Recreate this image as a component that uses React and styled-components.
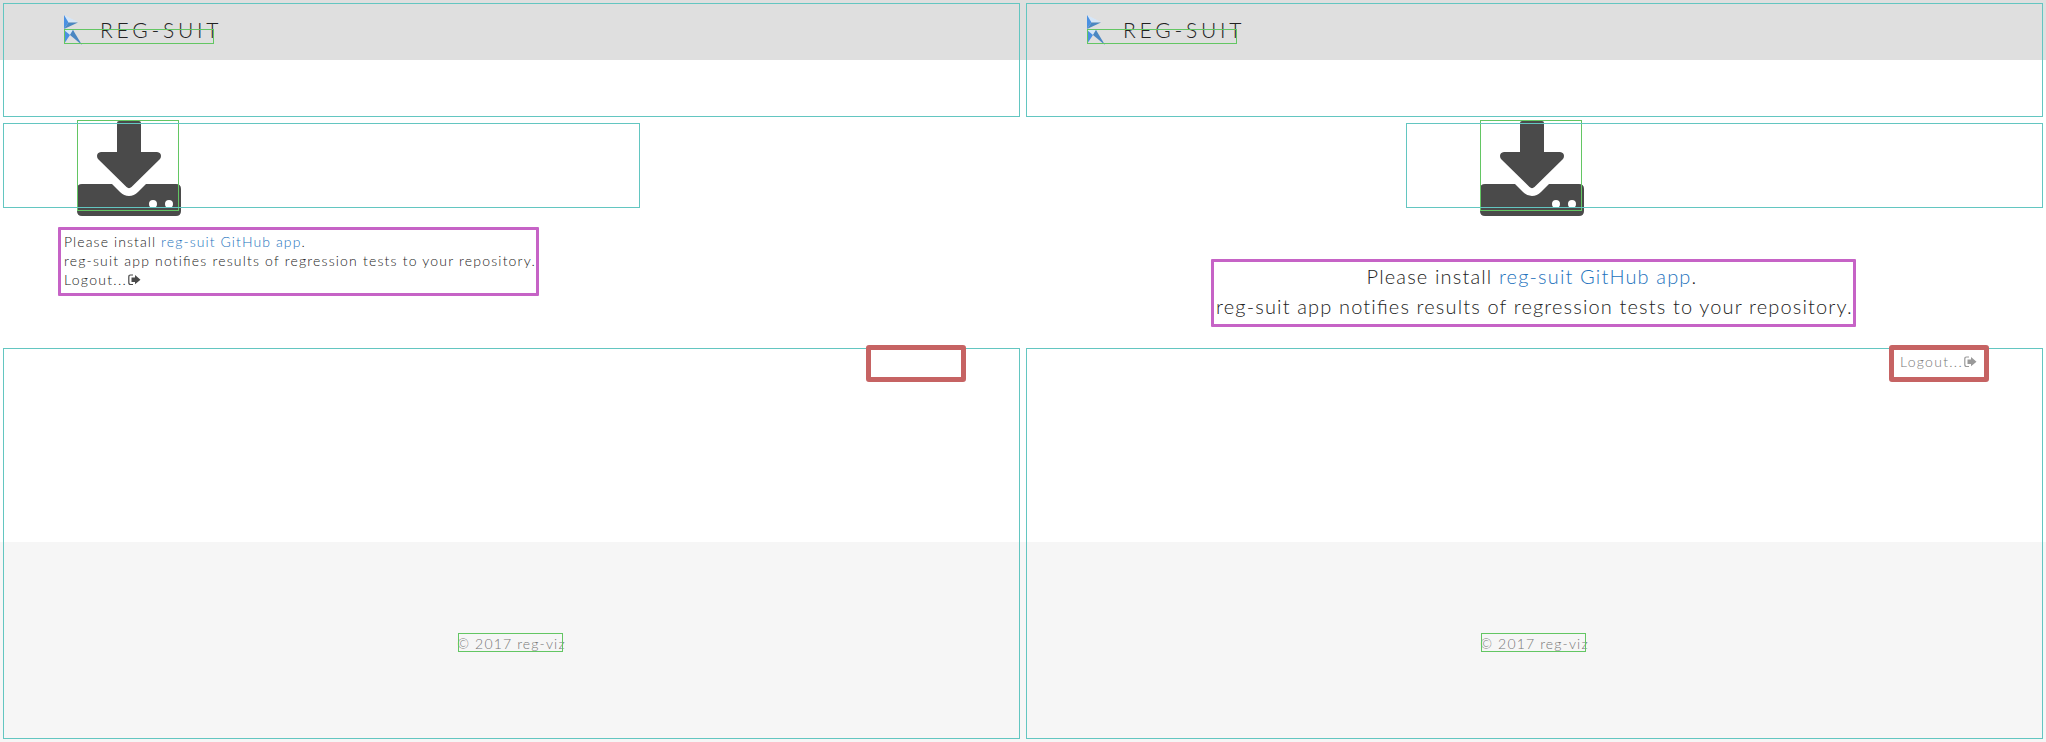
import React from 'react';
import styled, { createGlobalStyle } from 'styled-components';

const GlobalStyle = createGlobalStyle`
  * { box-sizing: border-box; }
  body { margin: 0; background: #fff; font-family: Lato, "Open Sans", sans-serif; color: #4a4a4a; }
`;

const Comparison = styled.div`
  display: grid;
  grid-template-columns: 1023px 1023px;
  height: 742px;
  overflow: hidden;
`;
const Panel = styled.section`
  position: relative;
  display: flex;
  flex-direction: column;
  height: 742px;
`;
const Header = styled.header`
  height: 60px;
  padding: 15px 64px 0;
  display: flex;
  align-items: flex-start;
  background: #dfdfdf;
`;
const LogoText = styled.span`
  margin-left: 17px;
  font-size: 21px;
  font-weight: 300;
  line-height: 30px;
  letter-spacing: 3.8px;
  color: #222;
  white-space: nowrap;
`;
const Main = styled.main`
  flex: 1;
  display: flex;
  flex-direction: column;
  align-items: ${p => (p.$centered ? 'center' : 'flex-start')};
  padding: 61px 64px 0;
`;
const IconHolder = styled.div`
  height: 96px;
  margin-left: ${p => (p.$centered ? '-5px' : '13px')};
  svg { display: block; }
`;
const Message = styled.div`
  margin-top: ${p => (p.$large ? '44px' : '15px')};
  text-align: ${p => (p.$large ? 'center' : 'left')};
  font-size: ${p => (p.$large ? '20px' : '14px')};
  line-height: ${p => (p.$large ? '30px' : '19px')};
  font-weight: 300;
  letter-spacing: ${p => (p.$large ? '1.15px' : '1.19px')};
  color: #222;
  white-space: nowrap;
  p { margin: 0; }
  p:first-child {
    padding-right: ${p => (p.$large ? '5px' : '0')};
    letter-spacing: ${p => (p.$large ? '1.15px' : '1.1px')};
  }
`;
const Ligature = styled.span`font-feature-settings: "liga" 1;`;
const Link = styled.a`color: #2473bd;`;
const Logout = styled.div`
  display: flex;
  align-items: center;
  height: 19px;
  font-size: 14px;
  font-weight: 300;
  line-height: 19px;
  letter-spacing: 1.3px;
  color: ${p => (p.$muted ? '#777' : '#222')};
  align-self: ${p => (p.$muted ? 'flex-end' : 'auto')};
  margin-top: ${p => (p.$muted ? '31px' : '0')};
  margin-right: ${p => (p.$muted ? '5px' : '0')};
  svg { margin-left: 1px; color: ${p => (p.$muted ? '#999' : '#4a4a4a')}; }
`;
const Footer = styled.footer`
  height: 200px;
  padding-top: 2px;
  display: flex;
  align-items: center;
  justify-content: center;
  background: #f6f6f6;
  color: #777;
  font-size: 14px;
  font-weight: 300;
  letter-spacing: 1.15px;
`;
const Marker = styled.div`
  position: absolute;
  left: ${p => p.$x}px;
  top: ${p => p.$y}px;
  width: ${p => p.$w}px;
  height: ${p => p.$h}px;
  border: ${p => p.$line || 1}px solid ${p => p.$color};
  border-radius: ${p => p.$radius || 0}px;
`;

const CYAN = '#63c6c1';
const GREEN = '#63c663';
const MAGENTA = '#c663c6';
const RED = '#c66363';

const LogoMark = () => (
  <svg width="19" height="30" viewBox="0 0 19 30">
    <path d="M0 0 14 7 4 7Z" fill="#d5e6f8" />
    <path d="M0 0 4.500 7.500 0 14Z" fill="#4a90e2" />
    <path d="M4.500 7.500H14L0 14Z" fill="#4b87c2" />
    <path d="M0 14.500H9L5.500 20Z" fill="#d5e6f8" />
    <path d="M0 15 6 20 0 29Z" fill="#4a90e2" />
    <path d="M6 20 9 15 11 20Z" fill="#84b5ea" />
    <path d="M9 15 18 30 6 20Z" fill="#4b87c2" />
  </svg>
);

const DownloadIcon = () => (
  <svg width="104" height="96" viewBox="0 0 104 96" fill="#4a4a4a">
    <path d="M42 0H62Q64 0 64 2V31H80Q84 31.500 84 35Q84 37 82.500 38.500L54.500 66Q52 68.300 49.500 66L21.500 38.500Q20 37 20 35Q20 31.500 24 31H40V2Q40 0 42 0Z" />
    <path fillRule="evenodd" d="M5 63H35L43 71Q47 75 52 75Q57 75 61 71L69 63H99Q104 63 104 68V90Q104 95 99 95H5Q0 95 0 90V68Q0 63 5 63ZM72 83A4 4 0 1 0 80 83A4 4 0 1 0 72 83ZM88 83A4 4 0 1 0 96 83A4 4 0 1 0 88 83Z" />
  </svg>
);

const SignOutIcon = () => (
  <svg width="13" height="12" viewBox="0 0 13 12">
    <path d="M5 1H2.500Q.8 1 .8 3V8.500Q.8 10.500 2.500 10.500H5" fill="none" stroke="currentColor" strokeWidth="1.200" />
    <path d="M3.500 3.500H7V1L12.500 5.700 7 10.300V8H3.500Z" fill="currentColor" />
  </svg>
);

const LogoutLink = ({ muted }) => (
  <Logout $muted={muted}>Logout...<SignOutIcon /></Logout>
);

const Page = ({ centered, markers }) => (
  <Panel>
    <Header><LogoMark /><LogoText>REG-SUIT</LogoText></Header>
    <Main $centered={centered}>
      <IconHolder $centered={centered}><DownloadIcon /></IconHolder>
      <Message $large={centered}>
        <p>Please install <Link>reg-suit GitHub app</Link>.</p>
        <p>reg-suit app noti<Ligature>fi</Ligature>es results of regression tests to your repository.</p>
      </Message>
      <LogoutLink muted={centered} />
    </Main>
    <Footer>© 2017 reg-viz</Footer>
    <Marker $x={3} $y={3} $w={1017} $h={114} $color={CYAN} />
    <Marker $x={3} $y={348} $w={1017} $h={391} $color={CYAN} />
    <Marker $x={64} $y={29} $w={150} $h={15} $color={GREEN} />
    <Marker $x={458} $y={633} $w={105} $h={19} $color={GREEN} />
    {markers.map((m, i) => (
      <Marker key={i} $x={m.x} $y={m.y} $w={m.w} $h={m.h} $color={m.color} $line={m.line} $radius={m.radius} />
    ))}
  </Panel>
);

const before = [
  { x: 77, y: 120, w: 102, h: 91, color: GREEN },
  { x: 3, y: 123, w: 637, h: 85, color: CYAN },
  { x: 58, y: 227, w: 481, h: 69, color: MAGENTA, line: 3, radius: 1 },
  { x: 866, y: 345, w: 100, h: 37, color: RED, line: 5, radius: 3 },
];
const after = [
  { x: 457, y: 120, w: 102, h: 91, color: GREEN },
  { x: 383, y: 123, w: 637, h: 85, color: CYAN },
  { x: 188, y: 259, w: 645, h: 68, color: MAGENTA, line: 3, radius: 1 },
  { x: 866, y: 345, w: 100, h: 37, color: RED, line: 5, radius: 3 },
];

export default function App() {
  return (
    <>
      <GlobalStyle />
      <Comparison>
        <Page markers={before} />
        <Page centered markers={after} />
      </Comparison>
    </>
  );
}
